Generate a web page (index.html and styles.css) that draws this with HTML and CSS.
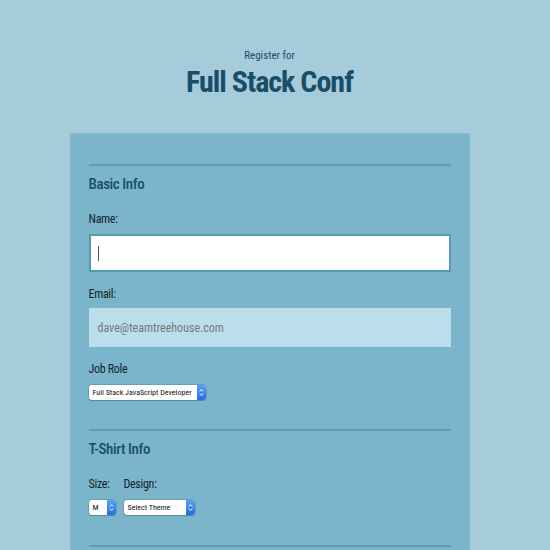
FILE: index.html
```html
<!DOCTYPE html>
<html>
<head>
<meta charset="utf-8">
<link rel="stylesheet" href="styles.css">
</head>
<body>
<div class="page">
  <header class="header">
    <div class="pre">Register for</div>
    <h1 class="title">Full Stack Conf</h1>
  </header>
  <form class="panel">
    <hr class="rule">
    <h2 class="section">Basic Info</h2>
    <label class="label first">Name:</label>
    <div class="input name"><span class="caret"></span></div>
    <label class="label">Email:</label>
    <div class="input email">dave@teamtreehouse.com</div>
    <label class="label">Job Role</label>
    <div class="select job"><span class="opt">Full Stack JavaScript Developer</span><span class="arrow"><svg width="5" height="9" viewBox="0 0 5 9"><path d="M0.8 3.4 L2.5 1.6 L4.2 3.4 M0.8 5.6 L2.5 7.4 L4.2 5.6" fill="none" stroke="#fff" stroke-width="1"/></svg></span></div>
    <hr class="rule second">
    <h2 class="section">T-Shirt Info</h2>
    <div class="row">
      <div class="col">
        <label class="label first">Size:</label>
        <div class="select size"><span class="opt">M</span><span class="arrow"><svg width="5" height="9" viewBox="0 0 5 9"><path d="M0.8 3.4 L2.5 1.6 L4.2 3.4 M0.8 5.6 L2.5 7.4 L4.2 5.6" fill="none" stroke="#fff" stroke-width="1"/></svg></span></div>
      </div>
      <div class="col">
        <label class="label first">Design:</label>
        <div class="select design"><span class="opt">Select Theme</span><span class="arrow"><svg width="5" height="9" viewBox="0 0 5 9"><path d="M0.8 3.4 L2.5 1.6 L4.2 3.4 M0.8 5.6 L2.5 7.4 L4.2 5.6" fill="none" stroke="#fff" stroke-width="1"/></svg></span></div>
      </div>
    </div>
    <hr class="rule third">
  </form>
</div>
</body>
</html>
```

FILE: styles.css
```css
html, body {
  margin: 0;
  padding: 0;
  background: #a6cbdb;
  font-family: "Roboto Condensed", "Liberation Sans Narrow", "DejaVu Sans Condensed", sans-serif;
}
.page {
  width: 539px;
  overflow: hidden;
  height: 550px;
}
.header {
  padding-top: 48px;
  text-align: center;
  color: #184e68;
}
.pre {
  font-size: 11px;
  line-height: 16px;
}
.title {
  margin: 0;
  font-size: 30px;
  line-height: 36px;
  font-weight: 700;
  letter-spacing: -1px;
}
.panel {
  width: 362px;
  margin: 33px auto 0;
  padding: 31px 19px 20px;
  background: #7ab5cb;
  box-shadow: inset 0 0 0 1px #84bcd0;
  display: flex;
  flex-direction: column;
  align-items: flex-start;
}
.rule {
  width: 100%;
  margin: 0;
  border: 0;
  height: 2px;
  background: #5c9db5;
}
.rule.second { margin-top: 29px; }
.rule.third { margin-top: 30px; }
.section {
  margin: 8px 0 0;
  font-size: 15px;
  line-height: 20px;
  font-weight: 500;
  letter-spacing: -0.4px;
  color: #184e68;
}
.label {
  display: block;
  margin-top: 14px;
  font-size: 12px;
  line-height: 16px;
  letter-spacing: -0.3px;
  font-weight: 400;
  color: #15232a;
}
.label.first { margin-top: 17px; }
.input {
  box-sizing: border-box;
  width: 100%;
  margin-top: 7px;
  height: 38px;
  font-size: 12px;
  display: flex;
  align-items: center;
}
.name {
  background: #fff;
  border: 2px solid #5599b2;
  padding-left: 7px;
}
.caret {
  width: 1px;
  height: 15px;
  background: #555;
}
.email {
  margin-top: 6px;
  height: 39px;
  background: #bbdeeb;
  padding-left: 9px;
  color: #6e7b80;
}
.select {
  margin-top: 8px;
  height: 15px;
  box-sizing: border-box;
  display: flex;
  align-items: stretch;
  background: #fff;
  border-radius: 3px;
  box-shadow: 0 0 0 0.5px rgba(0,0,0,0.25), 0 1px 1px rgba(0,0,0,0.15);
  font-family: "Roboto Condensed", "Liberation Sans Narrow", sans-serif;
  font-size: 8px;
  color: #111;
}
.select .opt {
  flex: 1;
  padding-left: 4px;
  display: flex;
  align-items: center;
  white-space: nowrap;
  overflow: hidden;
}
.select .arrow {
  width: 9px;
  border-radius: 0 3px 3px 0;
  background: linear-gradient(#5da0f5, #1f6fe6);
  display: flex;
  align-items: center;
  justify-content: center;
}
.job { width: 117px; }
.size { width: 27px; }
.design { width: 71px; }
.row {
  display: flex;
  gap: 8px;
}
.col {
  display: flex;
  flex-direction: column;
  align-items: flex-start;
}
```
